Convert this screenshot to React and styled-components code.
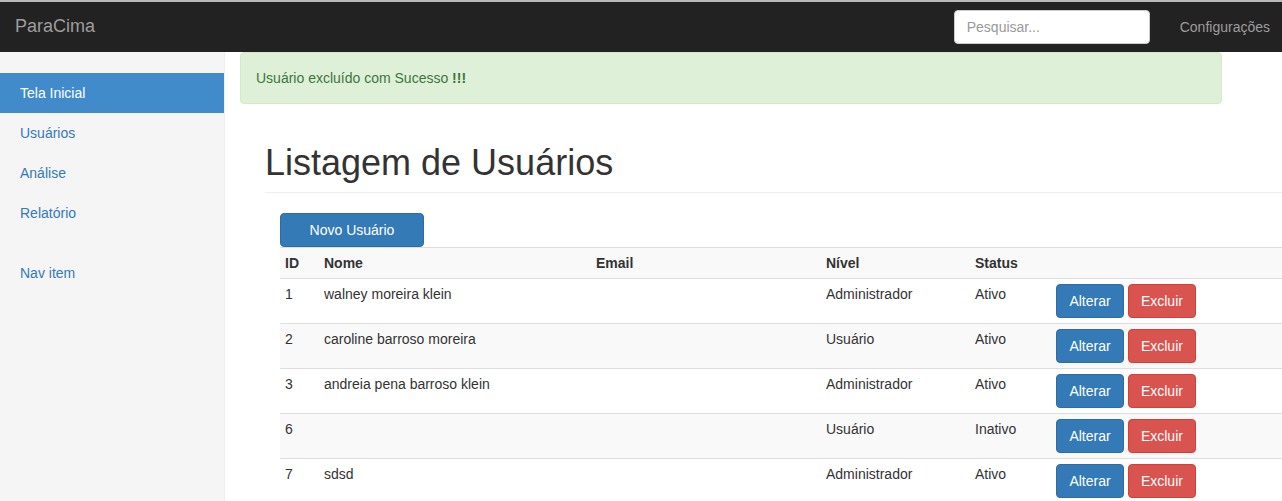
import React from 'react'
import styled, { createGlobalStyle } from 'styled-components'

const colors = {
  text: '#333',
  navbar: '#222',
  navText: '#9d9d9d',
  link: '#337ab7',
  active: '#428bca',
  sidebar: '#f5f5f5',
  border: '#ddd',
  stripe: '#f9f9f9',
  primary: '#337ab7',
  primaryBorder: '#2e6da4',
  danger: '#d9534f',
  dangerBorder: '#d43f3a',
}

const GlobalStyle = createGlobalStyle`
  * { box-sizing: border-box; }
  html, body { margin: 0; padding: 0; }
  body {
    font-family: "Liberation Sans", Arial, Helvetica, sans-serif;
    font-size: 14px;
    line-height: 20px;
    color: ${colors.text};
    background: #fff;
    overflow: hidden;
  }
`

const users = [
  { id: 1, nome: 'walney moreira klein', nivel: 'Administrador', status: 'Ativo' },
  { id: 2, nome: 'caroline barroso moreira', nivel: 'Usuário', status: 'Ativo' },
  { id: 3, nome: 'andreia pena barroso klein', nivel: 'Administrador', status: 'Ativo' },
  { id: 6, nome: '', nivel: 'Usuário', status: 'Inativo' },
  { id: 7, nome: 'sdsd', nivel: 'Administrador', status: 'Ativo' },
]

const App = () => {
  return (
    <Page>
      <GlobalStyle />
      <Navbar>
        <Brand>ParaCima</Brand>
        <NavRight>
          <Search placeholder="Pesquisar..." />
          <NavLink>Configurações</NavLink>
        </NavRight>
      </Navbar>
      <Body>
        <Sidebar>
          <NavList>
            <NavItem active>Tela Inicial</NavItem>
            <NavItem>Usuários</NavItem>
            <NavItem>Análise</NavItem>
            <NavItem>Relatório</NavItem>
          </NavList>
          <NavList>
            <NavItem>Nav item</NavItem>
          </NavList>
        </Sidebar>
        <Main>
          <Alert>
            Usuário excluído com Sucesso <strong>!!!</strong>
          </Alert>
          <PageHeader>Listagem de Usuários</PageHeader>
          <TableArea>
            <NewButton>Novo Usuário</NewButton>
            <Table>
              <colgroup>
                <col style={{ width: 39 }} />
                <col style={{ width: 272 }} />
                <col style={{ width: 230 }} />
                <col style={{ width: 149 }} />
                <col style={{ width: 81 }} />
                <col />
              </colgroup>
              <tbody>
                <Row>
                  <Th>ID</Th>
                  <Th>Nome</Th>
                  <Th>Email</Th>
                  <Th>Nível</Th>
                  <Th>Status</Th>
                  <Th />
                </Row>
                {users.map((u) => (
                  <Row key={u.id}>
                    <Td>{u.id}</Td>
                    <Td>{u.nome}</Td>
                    <Td></Td>
                    <Td>{u.nivel}</Td>
                    <Td>{u.status}</Td>
                    <Actions>
                      <Btn>Alterar</Btn> <Btn variant="danger">Excluir</Btn>
                    </Actions>
                  </Row>
                ))}
              </tbody>
            </Table>
          </TableArea>
        </Main>
      </Body>
    </Page>
  )
}

const Page = styled.div`
  display: flex;
  flex-direction: column;
  min-height: 100vh;
  width: 1282px;
  overflow: hidden;
`

const Navbar = styled.nav`
  display: flex;
  align-items: center;
  justify-content: space-between;
  height: 52px;
  background: ${colors.navbar};
  border-top: 2px solid #b9b9b9;
  flex-shrink: 0;
`

const Brand = styled.a`
  padding: 0 15px;
  font-size: 18px;
  line-height: 20px;
  color: ${colors.navText};
  margin-top: -2px;
`

const NavRight = styled.div`
  display: flex;
  align-items: center;
  gap: 30px;
  padding-right: 12px;
`

const Search = styled.input`
  width: 196px;
  height: 34px;
  padding: 6px 12px;
  border: 1px solid #ccc;
  border-radius: 4px;
  font-family: inherit;
  font-size: 14px;
  color: #555;
  background: #fff;
  outline: none;
  &::placeholder {
    color: #999;
  }
`

const NavLink = styled.a`
  color: ${colors.navText};
  font-size: 14px;
`

const Body = styled.div`
  display: flex;
  flex: 1;
`

const Sidebar = styled.aside`
  width: 225px;
  flex-shrink: 0;
  background: ${colors.sidebar};
  border-right: 1px solid #eee;
  padding-top: 21px;
`

const NavList = styled.ul`
  list-style: none;
  margin: 0 0 20px;
  padding: 0;
`

const NavItem = styled.li`
  height: 40px;
  padding: 10px 20px;
  line-height: 20px;
  color: ${(p) => (p.active ? '#fff' : colors.link)};
  background: ${(p) => (p.active ? colors.active : 'transparent')};
`

const Main = styled.main`
  flex: 1;
  min-width: 0;
  padding-left: 15px;
  overflow: hidden;
`

const Alert = styled.div`
  width: 982px;
  padding: 15px;
  background: #dff0d8;
  border: 1px solid #d6e9c6;
  border-radius: 4px;
  color: #3c763d;
`

const PageHeader = styled.h1`
  margin: 39px 0 20px 25px;
  padding-bottom: 9px;
  border-bottom: 1px solid #eee;
  font-size: 36px;
  font-weight: 500;
  line-height: 1.1;
  color: ${colors.text};
`

const TableArea = styled.div`
  margin-left: 40px;
`

const NewButton = styled.button`
  display: block;
  width: 144px;
  height: 34px;
  padding: 6px 12px;
  font-family: inherit;
  font-size: 14px;
  line-height: 20px;
  color: #fff;
  background: ${colors.primary};
  border: 1px solid ${colors.primaryBorder};
  border-radius: 4px;
`

const Table = styled.table`
  width: 1100px;
  table-layout: fixed;
  border-collapse: collapse;
  border-spacing: 0;
`

const Row = styled.tr`
  border-top: 1px solid ${colors.border};
  &:nth-child(odd) {
    background: ${colors.stripe};
  }
`

const Th = styled.td`
  padding: 5px;
  font-weight: bold;
  text-align: left;
  vertical-align: top;
`

const Td = styled.td`
  padding: 5px;
  height: 44px;
  vertical-align: top;
`

const Actions = styled(Td)`
  white-space: nowrap;
`

const Btn = styled.button`
  display: inline-block;
  min-width: 68px;
  height: 34px;
  padding: 6px 12px;
  font-family: inherit;
  font-size: 14px;
  line-height: 20px;
  color: #fff;
  background: ${(p) => (p.variant === 'danger' ? colors.danger : colors.primary)};
  border: 1px solid ${(p) => (p.variant === 'danger' ? colors.dangerBorder : colors.primaryBorder)};
  border-radius: 4px;
`

export default App
